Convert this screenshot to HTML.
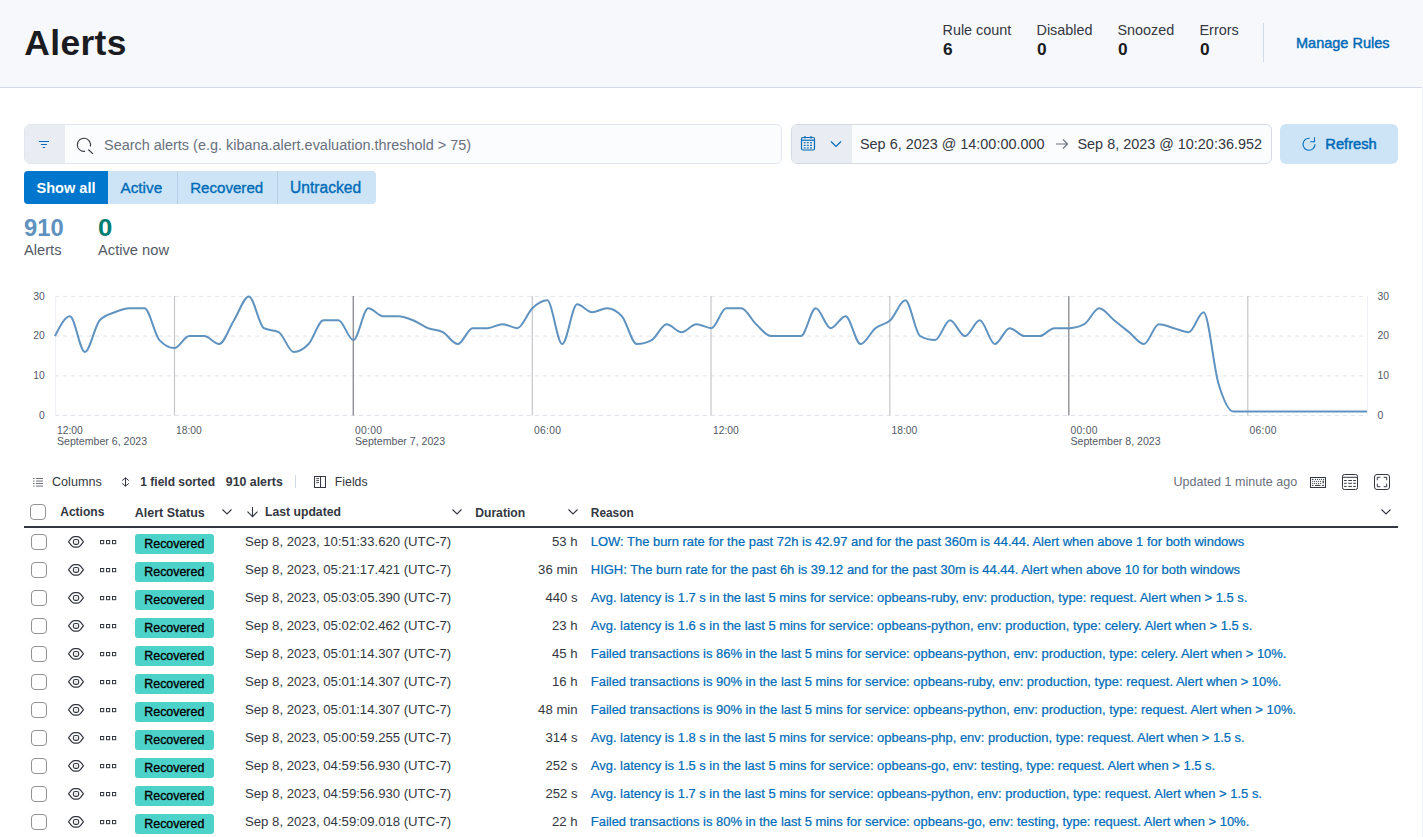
<!DOCTYPE html>
<html><head><meta charset="utf-8"><style>
html,body{margin:0;padding:0;width:1423px;height:837px;overflow:hidden;background:#fff;position:relative;font-family:"Liberation Sans", sans-serif}
.t{position:absolute;white-space:nowrap;line-height:1;font-family:"Liberation Sans", sans-serif}
svg{overflow:visible}
</style></head><body>
<div style="position:absolute;left:0px;top:0px;width:1423px;height:87px;background:#F7F8FC"></div>
<div style="position:absolute;left:0px;top:87px;width:1422px;height:1px;background:#D3DAE6"></div>
<div style="position:absolute;left:1422px;top:88px;width:1px;height:749px;background:#F1F4FA"></div>
<div class="t" style="left:24.30px;top:25.63px;font-size:35.4px;font-weight:700;color:#1A1C21;letter-spacing:0.35px">Alerts</div>
<div class="t" style="left:942.50px;top:23.01px;font-size:14.4px;font-weight:400;color:#343741;">Rule count</div>
<div class="t" style="left:1036.50px;top:23.01px;font-size:14.4px;font-weight:400;color:#343741;">Disabled</div>
<div class="t" style="left:1117.50px;top:23.01px;font-size:14.4px;font-weight:400;color:#343741;">Snoozed</div>
<div class="t" style="left:1199.50px;top:23.01px;font-size:14.4px;font-weight:400;color:#343741;">Errors</div>
<div class="t" style="left:942.50px;top:42.46px;font-size:16px;font-weight:700;color:#1A1C21;transform:scaleX(1.08);transform-origin:0 0">6</div>
<div class="t" style="left:1036.50px;top:42.46px;font-size:16px;font-weight:700;color:#1A1C21;transform:scaleX(1.08);transform-origin:0 0">0</div>
<div class="t" style="left:1117.50px;top:42.46px;font-size:16px;font-weight:700;color:#1A1C21;transform:scaleX(1.08);transform-origin:0 0">0</div>
<div class="t" style="left:1199.50px;top:42.46px;font-size:16px;font-weight:700;color:#1A1C21;transform:scaleX(1.08);transform-origin:0 0">0</div>
<div style="position:absolute;left:1263px;top:23px;width:1px;height:39px;background:#D3DAE6"></div>
<div class="t" style="left:1296.00px;top:36.33px;font-size:14.5px;font-weight:400;color:#006BB8;-webkit-text-stroke:0.45px currentColor">Manage Rules</div>
<div style="position:absolute;left:24px;top:124px;width:758px;height:40px;box-sizing:border-box;border:1px solid #E2E6EE;border-radius:6px;background:#FBFCFD;overflow:hidden"><div style="position:absolute;left:0;top:0;width:40px;height:38px;background:#E9EDF3"></div></div>
<svg style="position:absolute;left:38px;top:140px;" width="12" height="9" viewBox="0 0 12 9"><rect x="0.9" y="1" width="10.1" height="1" fill="#006BB8"/><rect x="2.9" y="4" width="6.1" height="1" fill="#006BB8"/><rect x="4.8" y="7" width="2.3" height="1" fill="#006BB8"/></svg>
<svg style="position:absolute;left:76px;top:138px;" width="17" height="17" viewBox="0 0 17 17"><path d="M9.05 13.3 A6.6 6.6 0 1 1 14.3 8.5" fill="none" stroke="#343741" stroke-width="1.1"/><path d="M12.3 11.5 L16.9 15.8" stroke="#343741" stroke-width="1.1"/></svg>
<div class="t" style="left:104.00px;top:137.77px;font-size:14.45px;font-weight:400;color:#69707D;">Search alerts (e.g. kibana.alert.evaluation.threshold &gt; 75)</div>
<div style="position:absolute;left:791px;top:124px;width:481px;height:40px;box-sizing:border-box;border:1px solid #D5DAE6;border-radius:6px;background:#FBFCFD;overflow:hidden"><div style="position:absolute;left:0;top:0;width:60px;height:38px;background:#E9EDF3"></div></div>
<svg style="position:absolute;left:800px;top:135px;" width="16" height="16" viewBox="0 0 16 16"><rect x="1.5" y="2.5" width="13" height="12.5" rx="1.5" fill="none" stroke="#006BB8" stroke-width="1.2"/><line x1="1.5" y1="5.2" x2="14.5" y2="5.2" stroke="#006BB8" stroke-width="1.2"/><line x1="5" y1="1" x2="5" y2="3.5" stroke="#006BB8" stroke-width="1.2"/><line x1="11" y1="1" x2="11" y2="3.5" stroke="#006BB8" stroke-width="1.2"/><rect x="3.6" y="7.2" width="2" height="1.1" fill="#006BB8"/><rect x="3.6" y="9.8" width="2" height="1.1" fill="#006BB8"/><rect x="3.6" y="12.4" width="2" height="1.1" fill="#006BB8"/><rect x="6.8" y="7.2" width="2" height="1.1" fill="#006BB8"/><rect x="6.8" y="9.8" width="2" height="1.1" fill="#006BB8"/><rect x="6.8" y="12.4" width="2" height="1.1" fill="#006BB8"/><rect x="10.0" y="7.2" width="2" height="1.1" fill="#006BB8"/><rect x="10.0" y="9.8" width="2" height="1.1" fill="#006BB8"/><rect x="10.0" y="12.4" width="2" height="1.1" fill="#006BB8"/></svg>
<svg style="position:absolute;left:830px;top:140px;" width="12" height="8" viewBox="0 0 12 8"><path d="M1 1.5 L6 6.5 L11 1.5" fill="none" stroke="#006BB8" stroke-width="1.2"/></svg>
<div class="t" style="left:860.00px;top:136.80px;font-size:14.41px;font-weight:400;color:#343741;">Sep 6, 2023 @ 14:00:00.000</div>
<svg style="position:absolute;left:1055px;top:137px;" width="14" height="14" viewBox="0 0 14 14"><path d="M1 7 H12.5 M8 2.5 L12.5 7 L8 11.5" fill="none" stroke="#69707D" stroke-width="1.1"/></svg>
<div class="t" style="left:1077.50px;top:136.80px;font-size:14.41px;font-weight:400;color:#343741;">Sep 8, 2023 @ 10:20:36.952</div>
<div style="position:absolute;left:1280px;top:124px;width:118px;height:40px;background:#CCE4F5;border-radius:6px"></div>
<svg style="position:absolute;left:1301px;top:136px;" width="16" height="16" viewBox="0 0 16 16"><path d="M14 8.3 A6 6 0 1 1 8.6 2.3" fill="none" stroke="#006BB8" stroke-width="1.1"/><path d="M9.3 5.7 H13.5 V1.2" fill="none" stroke="#006BB8" stroke-width="1.1"/></svg>
<div class="t" style="left:1325.30px;top:136.56px;font-size:14.7px;font-weight:400;color:#006BB8;-webkit-text-stroke:0.5px currentColor">Refresh</div>
<div style="position:absolute;left:24px;top:171px;width:352px;height:33px;border-radius:4px;overflow:hidden;background:#CCE4F5"><div style="position:absolute;left:0;top:0;width:84px;height:33px;background:#0077CC"></div><div style="position:absolute;left:153px;top:0;width:1px;height:33px;background:#B7CFE6"></div><div style="position:absolute;left:253px;top:0;width:1px;height:33px;background:#B7CFE6"></div></div>
<div class="t" style="left:36.50px;top:180.58px;font-size:14.55px;font-weight:700;color:#FFFFFF;">Show all</div>
<div class="t" style="left:120.50px;top:179.95px;font-size:15.3px;font-weight:400;color:#006BB8;-webkit-text-stroke:0.35px currentColor">Active</div>
<div class="t" style="left:190.20px;top:180.12px;font-size:15.1px;font-weight:400;color:#006BB8;-webkit-text-stroke:0.35px currentColor">Recovered</div>
<div class="t" style="left:290.00px;top:179.69px;font-size:15.6px;font-weight:400;color:#006BB8;-webkit-text-stroke:0.35px currentColor">Untracked</div>
<div class="t" style="left:24.00px;top:216.45px;font-size:23.8px;font-weight:700;color:#6092C0;">910</div>
<div class="t" style="left:98.30px;top:216.45px;font-size:23.8px;font-weight:700;color:#017D73;transform:scaleX(1.08);transform-origin:0 0">0</div>
<div class="t" style="left:24.00px;top:242.96px;font-size:14.7px;font-weight:400;color:#535966;">Alerts</div>
<div class="t" style="left:98.00px;top:242.96px;font-size:14.7px;font-weight:400;color:#535966;">Active now</div>
<svg style="position:absolute;left:0px;top:0px;pointer-events:none" width="1423" height="837" viewBox="0 0 1423 837"><line x1="55" y1="296.4" x2="1367" y2="296.4" stroke="#E0E3EB" stroke-width="1" stroke-dasharray="4 4"/><line x1="55" y1="336.1" x2="1367" y2="336.1" stroke="#E0E3EB" stroke-width="1" stroke-dasharray="4 4"/><line x1="55" y1="375.8" x2="1367" y2="375.8" stroke="#E0E3EB" stroke-width="1" stroke-dasharray="4 4"/><line x1="55" y1="415.5" x2="1367" y2="415.5" stroke="#E0E3EB" stroke-width="1" stroke-dasharray="4 4"/><line x1="55.5" y1="296" x2="55.5" y2="415.5" stroke="#EEF0F6" stroke-width="1"/><line x1="1367.5" y1="296" x2="1367.5" y2="415.5" stroke="#EEF0F6" stroke-width="1"/><line x1="174.5" y1="296" x2="174.5" y2="415.5" stroke="#C6C7CA" stroke-width="1.2"/><line x1="353.3" y1="296" x2="353.3" y2="415.5" stroke="#8F9196" stroke-width="1.4"/><line x1="532.3" y1="296" x2="532.3" y2="415.5" stroke="#C6C7CA" stroke-width="1.2"/><line x1="711.0" y1="296" x2="711.0" y2="415.5" stroke="#C6C7CA" stroke-width="1.2"/><line x1="889.8" y1="296" x2="889.8" y2="415.5" stroke="#C6C7CA" stroke-width="1.2"/><line x1="1068.8" y1="296" x2="1068.8" y2="415.5" stroke="#8F9196" stroke-width="1.4"/><line x1="1247.8" y1="296" x2="1247.8" y2="415.5" stroke="#C6C7CA" stroke-width="1.2"/><path d="M55.00,336.10 C59.97,326.18 64.94,316.25 69.92,316.25 C74.89,316.25 79.86,351.98 84.83,351.98 C89.81,351.98 94.78,325.51 99.75,320.22 C104.72,314.93 109.70,314.26 114.67,312.28 C119.64,310.29 124.61,308.31 129.58,308.31 C134.56,308.31 139.53,308.31 144.50,308.31 C149.47,308.31 154.45,334.78 159.42,340.07 C164.39,345.36 169.36,348.01 174.34,348.01 C179.31,348.01 184.28,336.10 189.25,336.10 C194.23,336.10 199.20,336.10 204.17,336.10 C209.14,336.10 214.11,344.04 219.09,344.04 C224.06,344.04 229.03,328.16 234.00,320.22 C238.98,312.28 243.95,296.40 248.92,296.40 C253.89,296.40 258.87,325.51 263.84,328.16 C268.81,330.81 273.78,329.48 278.75,332.13 C283.73,334.78 288.70,351.98 293.67,351.98 C298.64,351.98 303.62,349.33 308.59,344.04 C313.56,338.75 318.53,320.22 323.51,320.22 C328.48,320.22 333.45,320.22 338.42,320.22 C343.40,320.22 348.37,340.07 353.34,340.07 C358.31,340.07 363.28,308.31 368.26,308.31 C373.23,308.31 378.20,316.25 383.17,316.25 C388.15,316.25 393.12,316.25 398.09,316.25 C403.06,316.25 408.04,318.24 413.01,320.22 C417.98,322.21 422.95,326.17 427.93,328.16 C432.90,330.14 437.87,329.48 442.84,332.13 C447.81,334.78 452.79,344.04 457.76,344.04 C462.73,344.04 467.70,328.16 472.68,328.16 C477.65,328.16 482.62,328.16 487.59,328.16 C492.57,328.16 497.54,324.19 502.51,324.19 C507.48,324.19 512.45,328.16 517.43,328.16 C522.40,328.16 527.37,312.94 532.34,308.31 C537.32,303.68 542.29,300.37 547.26,300.37 C552.23,300.37 557.21,344.04 562.18,344.04 C567.15,344.04 572.12,304.34 577.10,304.34 C582.07,304.34 587.04,312.28 592.01,312.28 C596.98,312.28 601.96,308.31 606.93,308.31 C611.90,308.31 616.87,310.96 621.85,316.25 C626.82,321.54 631.79,344.04 636.76,344.04 C641.74,344.04 646.71,342.72 651.68,340.07 C656.65,337.42 661.62,324.19 666.60,324.19 C671.57,324.19 676.54,332.13 681.51,332.13 C686.49,332.13 691.46,324.19 696.43,324.19 C701.40,324.19 706.38,328.16 711.35,328.16 C716.32,328.16 721.29,308.31 726.26,308.31 C731.24,308.31 736.21,308.31 741.18,308.31 C746.15,308.31 751.13,319.56 756.10,324.19 C761.07,328.82 766.04,336.10 771.02,336.10 C775.99,336.10 780.96,336.10 785.93,336.10 C790.91,336.10 795.88,336.10 800.85,336.10 C805.82,336.10 810.79,308.31 815.77,308.31 C820.74,308.31 825.71,328.16 830.68,328.16 C835.66,328.16 840.63,316.25 845.60,316.25 C850.57,316.25 855.55,344.04 860.52,344.04 C865.49,344.04 870.46,332.13 875.43,328.16 C880.41,324.19 885.38,324.85 890.35,320.22 C895.32,315.59 900.30,300.37 905.27,300.37 C910.24,300.37 915.21,333.45 920.19,336.10 C925.16,338.75 930.13,340.07 935.10,340.07 C940.08,340.07 945.05,320.22 950.02,320.22 C954.99,320.22 959.96,336.10 964.94,336.10 C969.91,336.10 974.88,320.22 979.85,320.22 C984.83,320.22 989.80,344.04 994.77,344.04 C999.74,344.04 1004.72,328.16 1009.69,328.16 C1014.66,328.16 1019.63,336.10 1024.61,336.10 C1029.58,336.10 1034.55,336.10 1039.52,336.10 C1044.49,336.10 1049.47,328.16 1054.44,328.16 C1059.41,328.16 1064.38,328.16 1069.36,328.16 C1074.33,328.16 1079.30,326.84 1084.27,324.19 C1089.25,321.54 1094.22,308.31 1099.19,308.31 C1104.16,308.31 1109.13,316.25 1114.11,320.22 C1119.08,324.19 1124.05,328.16 1129.02,332.13 C1134.00,336.10 1138.97,344.04 1143.94,344.04 C1148.91,344.04 1153.89,324.19 1158.86,324.19 C1163.83,324.19 1168.80,326.84 1173.78,328.16 C1178.75,329.48 1183.72,332.13 1188.69,332.13 C1193.66,332.13 1198.64,312.28 1203.61,312.28 C1208.58,312.28 1213.55,367.20 1218.53,383.74 C1223.50,400.28 1228.47,411.53 1233.44,411.53 C1238.42,411.53 1243.39,411.53 1248.36,411.53 C1253.33,411.53 1258.30,411.53 1263.28,411.53 C1268.25,411.53 1273.22,411.53 1278.19,411.53 C1283.17,411.53 1288.14,411.53 1293.11,411.53 C1298.08,411.53 1303.06,411.53 1308.03,411.53 C1313.00,411.53 1317.97,411.53 1322.94,411.53 C1327.92,411.53 1332.89,411.53 1337.86,411.53 C1342.83,411.53 1347.81,411.53 1352.78,411.53 C1357.52,411.53 1362.26,411.53 1367.00,411.53" fill="none" stroke="#6092C0" stroke-width="2" stroke-linejoin="round"/></svg>
<div class="t" style="right:1378.30px;top:291.70px;font-size:10.4px;font-weight:400;color:#535966;">30</div>
<div class="t" style="left:1377.50px;top:291.70px;font-size:10.4px;font-weight:400;color:#535966;">30</div>
<div class="t" style="right:1378.30px;top:331.40px;font-size:10.4px;font-weight:400;color:#535966;">20</div>
<div class="t" style="left:1377.50px;top:331.40px;font-size:10.4px;font-weight:400;color:#535966;">20</div>
<div class="t" style="right:1378.30px;top:371.10px;font-size:10.4px;font-weight:400;color:#535966;">10</div>
<div class="t" style="left:1377.50px;top:371.10px;font-size:10.4px;font-weight:400;color:#535966;">10</div>
<div class="t" style="right:1378.30px;top:410.80px;font-size:10.4px;font-weight:400;color:#535966;">0</div>
<div class="t" style="left:1377.50px;top:410.80px;font-size:10.4px;font-weight:400;color:#535966;">0</div>
<div class="t" style="left:57.00px;top:426.28px;font-size:10.3px;font-weight:400;color:#535966;">12:00</div>
<div class="t" style="left:57.00px;top:435.63px;font-size:10.6px;font-weight:400;color:#535966;">September 6, 2023</div>
<div class="t" style="left:176.00px;top:426.28px;font-size:10.3px;font-weight:400;color:#535966;">18:00</div>
<div class="t" style="left:355.00px;top:426.28px;font-size:10.3px;font-weight:400;color:#535966;letter-spacing:0.3px">00:00</div>
<div class="t" style="left:355.00px;top:435.63px;font-size:10.6px;font-weight:400;color:#535966;">September 7, 2023</div>
<div class="t" style="left:534.00px;top:426.28px;font-size:10.3px;font-weight:400;color:#535966;letter-spacing:0.3px">06:00</div>
<div class="t" style="left:713.00px;top:426.28px;font-size:10.3px;font-weight:400;color:#535966;">12:00</div>
<div class="t" style="left:891.50px;top:426.28px;font-size:10.3px;font-weight:400;color:#535966;">18:00</div>
<div class="t" style="left:1070.50px;top:426.28px;font-size:10.3px;font-weight:400;color:#535966;letter-spacing:0.3px">00:00</div>
<div class="t" style="left:1070.50px;top:435.63px;font-size:10.6px;font-weight:400;color:#535966;">September 8, 2023</div>
<div class="t" style="left:1249.50px;top:426.28px;font-size:10.3px;font-weight:400;color:#535966;letter-spacing:0.3px">06:00</div>
<svg style="position:absolute;left:33px;top:478px;" width="10" height="9" viewBox="0 0 10 9"><rect x="0" y="0.10" width="1.5" height="0.9" fill="#5a5f6b"/><rect x="3" y="0.10" width="7" height="0.9" fill="#5a5f6b"/><rect x="0" y="2.60" width="1.5" height="0.9" fill="#5a5f6b"/><rect x="3" y="2.60" width="7" height="0.9" fill="#5a5f6b"/><rect x="0" y="5.10" width="1.5" height="0.9" fill="#5a5f6b"/><rect x="3" y="5.10" width="7" height="0.9" fill="#5a5f6b"/><rect x="0" y="7.60" width="1.5" height="0.9" fill="#5a5f6b"/><rect x="3" y="7.60" width="7" height="0.9" fill="#5a5f6b"/></svg>
<div class="t" style="left:52.00px;top:475.73px;font-size:12.6px;font-weight:400;color:#343741;">Columns</div>
<svg style="position:absolute;left:121px;top:477px;" width="9" height="10" viewBox="0 0 9 10"><path d="M4.5 0.8 V9.2 M1.2 3.6 L4.5 0.8 L7.8 3.6 M1.2 6.4 L4.5 9.2 L7.8 6.4" fill="none" stroke="#343741" stroke-width="1"/></svg>
<div class="t" style="left:140.30px;top:476.24px;font-size:12.0px;font-weight:700;color:#343741;">1 field sorted</div>
<div class="t" style="left:225.80px;top:475.95px;font-size:12.35px;font-weight:700;color:#343741;">910 alerts</div>
<div style="position:absolute;left:295px;top:475px;width:1px;height:13px;background:#D3DAE6"></div>
<svg style="position:absolute;left:314px;top:476px;" width="12" height="12" viewBox="0 0 12 12"><rect x="0.5" y="0.5" width="11" height="11" fill="none" stroke="#343741" stroke-width="1"/><line x1="6.5" y1="1" x2="6.5" y2="11" stroke="#343741" stroke-width="1"/><rect x="2.2" y="2.2" width="2.8" height="0.9" fill="#343741"/><rect x="2.2" y="4.2" width="2.8" height="0.9" fill="#343741"/><rect x="2.2" y="6.2" width="2.8" height="0.9" fill="#343741"/></svg>
<div class="t" style="left:334.80px;top:475.99px;font-size:12.3px;font-weight:400;color:#343741;">Fields</div>
<div class="t" style="left:1173.50px;top:475.86px;font-size:12.57px;font-weight:400;color:#69707D;">Updated 1 minute ago</div>
<svg style="position:absolute;left:1310px;top:477px;" width="16" height="11" viewBox="0 0 16 11"><rect x="0.5" y="0.5" width="15" height="10" fill="none" stroke="#343741" stroke-width="1"/><rect x="1.9" y="1.9" width="1.6" height="1" fill="#343741"/><rect x="5" y="1.9" width="1" height="1" fill="#343741"/><rect x="7" y="1.9" width="1" height="1" fill="#343741"/><rect x="9.1" y="1.9" width="1" height="1" fill="#343741"/><rect x="11.1" y="1.9" width="1" height="1" fill="#343741"/><rect x="13.1" y="1.9" width="1" height="1" fill="#343741"/><rect x="2.2" y="3.9" width="1" height="1" fill="#343741"/><rect x="2.2" y="5.9" width="1" height="1" fill="#343741"/><rect x="4.1" y="3.9" width="1" height="1" fill="#343741"/><rect x="4.1" y="5.9" width="1" height="1" fill="#343741"/><rect x="6.1" y="3.9" width="1" height="1" fill="#343741"/><rect x="6.1" y="5.9" width="1" height="1" fill="#343741"/><rect x="8.1" y="3.9" width="1" height="1" fill="#343741"/><rect x="8.1" y="5.9" width="1" height="1" fill="#343741"/><rect x="10.1" y="3.9" width="1" height="1" fill="#343741"/><rect x="10.1" y="5.9" width="1" height="1" fill="#343741"/><rect x="12.6" y="3.7" width="1.3" height="2.6" fill="#343741"/><rect x="1.9" y="7.9" width="1.6" height="1" fill="#343741"/><rect x="5" y="7.9" width="5.5" height="1" fill="#343741"/><rect x="12" y="7.9" width="1.9" height="1" fill="#343741"/></svg>
<svg style="position:absolute;left:1342px;top:474px;" width="16" height="16" viewBox="0 0 16 16"><rect x="0.5" y="0.5" width="15" height="15" rx="2" fill="none" stroke="#343741" stroke-width="1"/><line x1="1" y1="3.3" x2="15" y2="3.3" stroke="#343741" stroke-width="1"/><rect x="2.1" y="6.0" width="2.6" height="1" fill="#343741"/><rect x="6.3" y="6.0" width="3.6" height="1" fill="#343741"/><rect x="11.2" y="6.0" width="2.7" height="1" fill="#343741"/><rect x="2.1" y="8.8" width="2.6" height="1" fill="#343741"/><rect x="6.3" y="8.8" width="3.6" height="1" fill="#343741"/><rect x="11.2" y="8.8" width="2.7" height="1" fill="#343741"/><rect x="2.1" y="11.9" width="2.6" height="1" fill="#343741"/><rect x="6.3" y="11.9" width="3.6" height="1" fill="#343741"/><rect x="11.2" y="11.9" width="2.7" height="1" fill="#343741"/></svg>
<svg style="position:absolute;left:1374px;top:474px;" width="16" height="16" viewBox="0 0 16 16"><rect x="0.5" y="0.5" width="15" height="15" rx="2.5" fill="none" stroke="#343741" stroke-width="1"/><path d="M3.3 6.3 V3.3 H6.3 M9.7 3.3 H12.7 V6.3 M12.7 9.7 V12.7 H9.7 M6.3 12.7 H3.3 V9.7" fill="none" stroke="#343741" stroke-width="1"/></svg>
<div style="position:absolute;left:30px;top:504px;width:16px;height:16px;box-sizing:border-box;border:1px solid #909296;border-radius:4px;background:#fff"></div>
<div class="t" style="left:60.20px;top:505.80px;font-size:12.05px;font-weight:700;color:#343741;">Actions</div>
<div class="t" style="left:134.80px;top:506.94px;font-size:12.47px;font-weight:700;color:#343741;">Alert Status</div>
<svg style="position:absolute;left:221px;top:508px;" width="12" height="8" viewBox="0 0 12 8"><path d="M1.5 1.5 L6 6 L10.5 1.5" fill="none" stroke="#343741" stroke-width="1.1"/></svg>
<svg style="position:absolute;left:246px;top:506px;" width="13" height="12" viewBox="0 0 13 12"><path d="M6.5 1 V10.5 M1.5 5.6 L6.5 10.6 L11.5 5.6" fill="none" stroke="#343741" stroke-width="1.1"/></svg>
<div class="t" style="left:265.00px;top:505.66px;font-size:12.21px;font-weight:700;color:#343741;">Last updated</div>
<svg style="position:absolute;left:451px;top:508px;" width="12" height="8" viewBox="0 0 12 8"><path d="M1.5 1.5 L6 6 L10.5 1.5" fill="none" stroke="#343741" stroke-width="1.1"/></svg>
<div class="t" style="left:475.20px;top:507.21px;font-size:12.16px;font-weight:700;color:#343741;">Duration</div>
<svg style="position:absolute;left:567px;top:508px;" width="12" height="8" viewBox="0 0 12 8"><path d="M1.5 1.5 L6 6 L10.5 1.5" fill="none" stroke="#343741" stroke-width="1.1"/></svg>
<div class="t" style="left:590.80px;top:508.23px;font-size:11.9px;font-weight:700;color:#343741;">Reason</div>
<svg style="position:absolute;left:1380px;top:508px;" width="12" height="8" viewBox="0 0 12 8"><path d="M1.5 1.5 L6 6 L10.5 1.5" fill="none" stroke="#343741" stroke-width="1.1"/></svg>
<div style="position:absolute;left:24px;top:526px;width:1374px;height:2px;background:#343741"></div>
<div style="position:absolute;left:31px;top:534px;width:16px;height:16px;box-sizing:border-box;border:1px solid #909296;border-radius:4px;background:#fff"></div>
<svg style="position:absolute;left:68px;top:536px;" width="16" height="12" viewBox="0 0 16 12"><path d="M0.6,5.8 C2.4,3.3 3.9,0.6 6.5,0.6 H9.5 C12.1,0.6 13.6,3.3 15.4,5.8 C13.6,8.4 12.1,11.1 9.5,11.1 H6.5 C3.9,11.1 2.4,8.4 0.6,5.8 Z" fill="none" stroke="#343741" stroke-width="1.15"/><rect x="5.4" y="3.5" width="5.3" height="4.9" rx="1.8" fill="none" stroke="#343741" stroke-width="1.15"/><rect x="7.5" y="5.4" width="1.1" height="1.1" fill="#8a8f99"/></svg>
<svg style="position:absolute;left:99.5px;top:540px;" width="17" height="4.5" viewBox="0 0 17 4.5"><rect x="0.5" y="0.5" width="3.2" height="3.2" fill="none" stroke="#343741" stroke-width="1"/><rect x="6.5" y="0.5" width="3.2" height="3.2" fill="none" stroke="#343741" stroke-width="1"/><rect x="12.5" y="0.5" width="3.2" height="3.2" fill="none" stroke="#343741" stroke-width="1"/></svg>
<div style="position:absolute;left:135px;top:534px;width:79px;height:20px;background:#4DD2CA;border-radius:3px"></div>
<div class="t" style="left:144.30px;top:538.09px;font-size:12.41px;font-weight:400;color:#000000;-webkit-text-stroke:0.35px currentColor">Recovered</div>
<div class="t" style="left:245.00px;top:534.55px;font-size:13.17px;font-weight:400;color:#343741;">Sep 8, 2023, 10:51:33.620 (UTC-7)</div>
<div class="t" style="right:845.40px;top:534.55px;font-size:13.17px;font-weight:400;color:#343741;">53 h</div>
<div class="t" style="left:590.80px;top:535.53px;font-size:12.96px;font-weight:400;color:#006BB8;-webkit-text-stroke:0.22px currentColor">LOW: The burn rate for the past 72h is 42.97 and for the past 360m is 44.44. Alert when above 1 for both windows</div>
<div style="position:absolute;left:31px;top:562px;width:16px;height:16px;box-sizing:border-box;border:1px solid #909296;border-radius:4px;background:#fff"></div>
<svg style="position:absolute;left:68px;top:564px;" width="16" height="12" viewBox="0 0 16 12"><path d="M0.6,5.8 C2.4,3.3 3.9,0.6 6.5,0.6 H9.5 C12.1,0.6 13.6,3.3 15.4,5.8 C13.6,8.4 12.1,11.1 9.5,11.1 H6.5 C3.9,11.1 2.4,8.4 0.6,5.8 Z" fill="none" stroke="#343741" stroke-width="1.15"/><rect x="5.4" y="3.5" width="5.3" height="4.9" rx="1.8" fill="none" stroke="#343741" stroke-width="1.15"/><rect x="7.5" y="5.4" width="1.1" height="1.1" fill="#8a8f99"/></svg>
<svg style="position:absolute;left:99.5px;top:568px;" width="17" height="4.5" viewBox="0 0 17 4.5"><rect x="0.5" y="0.5" width="3.2" height="3.2" fill="none" stroke="#343741" stroke-width="1"/><rect x="6.5" y="0.5" width="3.2" height="3.2" fill="none" stroke="#343741" stroke-width="1"/><rect x="12.5" y="0.5" width="3.2" height="3.2" fill="none" stroke="#343741" stroke-width="1"/></svg>
<div style="position:absolute;left:135px;top:562px;width:79px;height:20px;background:#4DD2CA;border-radius:3px"></div>
<div class="t" style="left:144.30px;top:566.09px;font-size:12.41px;font-weight:400;color:#000000;-webkit-text-stroke:0.35px currentColor">Recovered</div>
<div class="t" style="left:245.00px;top:562.55px;font-size:13.17px;font-weight:400;color:#343741;">Sep 8, 2023, 05:21:17.421 (UTC-7)</div>
<div class="t" style="right:845.40px;top:562.55px;font-size:13.17px;font-weight:400;color:#343741;">36 min</div>
<div class="t" style="left:590.80px;top:563.53px;font-size:12.96px;font-weight:400;color:#006BB8;-webkit-text-stroke:0.22px currentColor">HIGH: The burn rate for the past 6h is 39.12 and for the past 30m is 44.44. Alert when above 10 for both windows</div>
<div style="position:absolute;left:31px;top:590px;width:16px;height:16px;box-sizing:border-box;border:1px solid #909296;border-radius:4px;background:#fff"></div>
<svg style="position:absolute;left:68px;top:592px;" width="16" height="12" viewBox="0 0 16 12"><path d="M0.6,5.8 C2.4,3.3 3.9,0.6 6.5,0.6 H9.5 C12.1,0.6 13.6,3.3 15.4,5.8 C13.6,8.4 12.1,11.1 9.5,11.1 H6.5 C3.9,11.1 2.4,8.4 0.6,5.8 Z" fill="none" stroke="#343741" stroke-width="1.15"/><rect x="5.4" y="3.5" width="5.3" height="4.9" rx="1.8" fill="none" stroke="#343741" stroke-width="1.15"/><rect x="7.5" y="5.4" width="1.1" height="1.1" fill="#8a8f99"/></svg>
<svg style="position:absolute;left:99.5px;top:596px;" width="17" height="4.5" viewBox="0 0 17 4.5"><rect x="0.5" y="0.5" width="3.2" height="3.2" fill="none" stroke="#343741" stroke-width="1"/><rect x="6.5" y="0.5" width="3.2" height="3.2" fill="none" stroke="#343741" stroke-width="1"/><rect x="12.5" y="0.5" width="3.2" height="3.2" fill="none" stroke="#343741" stroke-width="1"/></svg>
<div style="position:absolute;left:135px;top:590px;width:79px;height:20px;background:#4DD2CA;border-radius:3px"></div>
<div class="t" style="left:144.30px;top:594.09px;font-size:12.41px;font-weight:400;color:#000000;-webkit-text-stroke:0.35px currentColor">Recovered</div>
<div class="t" style="left:245.00px;top:590.55px;font-size:13.17px;font-weight:400;color:#343741;">Sep 8, 2023, 05:03:05.390 (UTC-7)</div>
<div class="t" style="right:845.40px;top:590.55px;font-size:13.17px;font-weight:400;color:#343741;">440 s</div>
<div class="t" style="left:590.80px;top:591.53px;font-size:12.96px;font-weight:400;color:#006BB8;-webkit-text-stroke:0.22px currentColor">Avg. latency is 1.7 s in the last 5 mins for service: opbeans-ruby, env: production, type: request. Alert when &gt; 1.5 s.</div>
<div style="position:absolute;left:31px;top:618px;width:16px;height:16px;box-sizing:border-box;border:1px solid #909296;border-radius:4px;background:#fff"></div>
<svg style="position:absolute;left:68px;top:620px;" width="16" height="12" viewBox="0 0 16 12"><path d="M0.6,5.8 C2.4,3.3 3.9,0.6 6.5,0.6 H9.5 C12.1,0.6 13.6,3.3 15.4,5.8 C13.6,8.4 12.1,11.1 9.5,11.1 H6.5 C3.9,11.1 2.4,8.4 0.6,5.8 Z" fill="none" stroke="#343741" stroke-width="1.15"/><rect x="5.4" y="3.5" width="5.3" height="4.9" rx="1.8" fill="none" stroke="#343741" stroke-width="1.15"/><rect x="7.5" y="5.4" width="1.1" height="1.1" fill="#8a8f99"/></svg>
<svg style="position:absolute;left:99.5px;top:624px;" width="17" height="4.5" viewBox="0 0 17 4.5"><rect x="0.5" y="0.5" width="3.2" height="3.2" fill="none" stroke="#343741" stroke-width="1"/><rect x="6.5" y="0.5" width="3.2" height="3.2" fill="none" stroke="#343741" stroke-width="1"/><rect x="12.5" y="0.5" width="3.2" height="3.2" fill="none" stroke="#343741" stroke-width="1"/></svg>
<div style="position:absolute;left:135px;top:618px;width:79px;height:20px;background:#4DD2CA;border-radius:3px"></div>
<div class="t" style="left:144.30px;top:622.09px;font-size:12.41px;font-weight:400;color:#000000;-webkit-text-stroke:0.35px currentColor">Recovered</div>
<div class="t" style="left:245.00px;top:618.55px;font-size:13.17px;font-weight:400;color:#343741;">Sep 8, 2023, 05:02:02.462 (UTC-7)</div>
<div class="t" style="right:845.40px;top:618.55px;font-size:13.17px;font-weight:400;color:#343741;">23 h</div>
<div class="t" style="left:590.80px;top:619.53px;font-size:12.96px;font-weight:400;color:#006BB8;-webkit-text-stroke:0.22px currentColor">Avg. latency is 1.6 s in the last 5 mins for service: opbeans-python, env: production, type: celery. Alert when &gt; 1.5 s.</div>
<div style="position:absolute;left:31px;top:646px;width:16px;height:16px;box-sizing:border-box;border:1px solid #909296;border-radius:4px;background:#fff"></div>
<svg style="position:absolute;left:68px;top:648px;" width="16" height="12" viewBox="0 0 16 12"><path d="M0.6,5.8 C2.4,3.3 3.9,0.6 6.5,0.6 H9.5 C12.1,0.6 13.6,3.3 15.4,5.8 C13.6,8.4 12.1,11.1 9.5,11.1 H6.5 C3.9,11.1 2.4,8.4 0.6,5.8 Z" fill="none" stroke="#343741" stroke-width="1.15"/><rect x="5.4" y="3.5" width="5.3" height="4.9" rx="1.8" fill="none" stroke="#343741" stroke-width="1.15"/><rect x="7.5" y="5.4" width="1.1" height="1.1" fill="#8a8f99"/></svg>
<svg style="position:absolute;left:99.5px;top:652px;" width="17" height="4.5" viewBox="0 0 17 4.5"><rect x="0.5" y="0.5" width="3.2" height="3.2" fill="none" stroke="#343741" stroke-width="1"/><rect x="6.5" y="0.5" width="3.2" height="3.2" fill="none" stroke="#343741" stroke-width="1"/><rect x="12.5" y="0.5" width="3.2" height="3.2" fill="none" stroke="#343741" stroke-width="1"/></svg>
<div style="position:absolute;left:135px;top:646px;width:79px;height:20px;background:#4DD2CA;border-radius:3px"></div>
<div class="t" style="left:144.30px;top:650.09px;font-size:12.41px;font-weight:400;color:#000000;-webkit-text-stroke:0.35px currentColor">Recovered</div>
<div class="t" style="left:245.00px;top:646.55px;font-size:13.17px;font-weight:400;color:#343741;">Sep 8, 2023, 05:01:14.307 (UTC-7)</div>
<div class="t" style="right:845.40px;top:646.55px;font-size:13.17px;font-weight:400;color:#343741;">45 h</div>
<div class="t" style="left:590.80px;top:647.53px;font-size:12.96px;font-weight:400;color:#006BB8;-webkit-text-stroke:0.22px currentColor">Failed transactions is 86% in the last 5 mins for service: opbeans-python, env: production, type: celery. Alert when &gt; 10%.</div>
<div style="position:absolute;left:31px;top:674px;width:16px;height:16px;box-sizing:border-box;border:1px solid #909296;border-radius:4px;background:#fff"></div>
<svg style="position:absolute;left:68px;top:676px;" width="16" height="12" viewBox="0 0 16 12"><path d="M0.6,5.8 C2.4,3.3 3.9,0.6 6.5,0.6 H9.5 C12.1,0.6 13.6,3.3 15.4,5.8 C13.6,8.4 12.1,11.1 9.5,11.1 H6.5 C3.9,11.1 2.4,8.4 0.6,5.8 Z" fill="none" stroke="#343741" stroke-width="1.15"/><rect x="5.4" y="3.5" width="5.3" height="4.9" rx="1.8" fill="none" stroke="#343741" stroke-width="1.15"/><rect x="7.5" y="5.4" width="1.1" height="1.1" fill="#8a8f99"/></svg>
<svg style="position:absolute;left:99.5px;top:680px;" width="17" height="4.5" viewBox="0 0 17 4.5"><rect x="0.5" y="0.5" width="3.2" height="3.2" fill="none" stroke="#343741" stroke-width="1"/><rect x="6.5" y="0.5" width="3.2" height="3.2" fill="none" stroke="#343741" stroke-width="1"/><rect x="12.5" y="0.5" width="3.2" height="3.2" fill="none" stroke="#343741" stroke-width="1"/></svg>
<div style="position:absolute;left:135px;top:674px;width:79px;height:20px;background:#4DD2CA;border-radius:3px"></div>
<div class="t" style="left:144.30px;top:678.09px;font-size:12.41px;font-weight:400;color:#000000;-webkit-text-stroke:0.35px currentColor">Recovered</div>
<div class="t" style="left:245.00px;top:674.55px;font-size:13.17px;font-weight:400;color:#343741;">Sep 8, 2023, 05:01:14.307 (UTC-7)</div>
<div class="t" style="right:845.40px;top:674.55px;font-size:13.17px;font-weight:400;color:#343741;">16 h</div>
<div class="t" style="left:590.80px;top:675.53px;font-size:12.96px;font-weight:400;color:#006BB8;-webkit-text-stroke:0.22px currentColor">Failed transactions is 90% in the last 5 mins for service: opbeans-ruby, env: production, type: request. Alert when &gt; 10%.</div>
<div style="position:absolute;left:31px;top:702px;width:16px;height:16px;box-sizing:border-box;border:1px solid #909296;border-radius:4px;background:#fff"></div>
<svg style="position:absolute;left:68px;top:704px;" width="16" height="12" viewBox="0 0 16 12"><path d="M0.6,5.8 C2.4,3.3 3.9,0.6 6.5,0.6 H9.5 C12.1,0.6 13.6,3.3 15.4,5.8 C13.6,8.4 12.1,11.1 9.5,11.1 H6.5 C3.9,11.1 2.4,8.4 0.6,5.8 Z" fill="none" stroke="#343741" stroke-width="1.15"/><rect x="5.4" y="3.5" width="5.3" height="4.9" rx="1.8" fill="none" stroke="#343741" stroke-width="1.15"/><rect x="7.5" y="5.4" width="1.1" height="1.1" fill="#8a8f99"/></svg>
<svg style="position:absolute;left:99.5px;top:708px;" width="17" height="4.5" viewBox="0 0 17 4.5"><rect x="0.5" y="0.5" width="3.2" height="3.2" fill="none" stroke="#343741" stroke-width="1"/><rect x="6.5" y="0.5" width="3.2" height="3.2" fill="none" stroke="#343741" stroke-width="1"/><rect x="12.5" y="0.5" width="3.2" height="3.2" fill="none" stroke="#343741" stroke-width="1"/></svg>
<div style="position:absolute;left:135px;top:702px;width:79px;height:20px;background:#4DD2CA;border-radius:3px"></div>
<div class="t" style="left:144.30px;top:706.09px;font-size:12.41px;font-weight:400;color:#000000;-webkit-text-stroke:0.35px currentColor">Recovered</div>
<div class="t" style="left:245.00px;top:702.55px;font-size:13.17px;font-weight:400;color:#343741;">Sep 8, 2023, 05:01:14.307 (UTC-7)</div>
<div class="t" style="right:845.40px;top:702.55px;font-size:13.17px;font-weight:400;color:#343741;">48 min</div>
<div class="t" style="left:590.80px;top:703.53px;font-size:12.96px;font-weight:400;color:#006BB8;-webkit-text-stroke:0.22px currentColor">Failed transactions is 90% in the last 5 mins for service: opbeans-python, env: production, type: request. Alert when &gt; 10%.</div>
<div style="position:absolute;left:31px;top:730px;width:16px;height:16px;box-sizing:border-box;border:1px solid #909296;border-radius:4px;background:#fff"></div>
<svg style="position:absolute;left:68px;top:732px;" width="16" height="12" viewBox="0 0 16 12"><path d="M0.6,5.8 C2.4,3.3 3.9,0.6 6.5,0.6 H9.5 C12.1,0.6 13.6,3.3 15.4,5.8 C13.6,8.4 12.1,11.1 9.5,11.1 H6.5 C3.9,11.1 2.4,8.4 0.6,5.8 Z" fill="none" stroke="#343741" stroke-width="1.15"/><rect x="5.4" y="3.5" width="5.3" height="4.9" rx="1.8" fill="none" stroke="#343741" stroke-width="1.15"/><rect x="7.5" y="5.4" width="1.1" height="1.1" fill="#8a8f99"/></svg>
<svg style="position:absolute;left:99.5px;top:736px;" width="17" height="4.5" viewBox="0 0 17 4.5"><rect x="0.5" y="0.5" width="3.2" height="3.2" fill="none" stroke="#343741" stroke-width="1"/><rect x="6.5" y="0.5" width="3.2" height="3.2" fill="none" stroke="#343741" stroke-width="1"/><rect x="12.5" y="0.5" width="3.2" height="3.2" fill="none" stroke="#343741" stroke-width="1"/></svg>
<div style="position:absolute;left:135px;top:730px;width:79px;height:20px;background:#4DD2CA;border-radius:3px"></div>
<div class="t" style="left:144.30px;top:734.09px;font-size:12.41px;font-weight:400;color:#000000;-webkit-text-stroke:0.35px currentColor">Recovered</div>
<div class="t" style="left:245.00px;top:730.55px;font-size:13.17px;font-weight:400;color:#343741;">Sep 8, 2023, 05:00:59.255 (UTC-7)</div>
<div class="t" style="right:845.40px;top:730.55px;font-size:13.17px;font-weight:400;color:#343741;">314 s</div>
<div class="t" style="left:590.80px;top:731.53px;font-size:12.96px;font-weight:400;color:#006BB8;-webkit-text-stroke:0.22px currentColor">Avg. latency is 1.8 s in the last 5 mins for service: opbeans-php, env: production, type: request. Alert when &gt; 1.5 s.</div>
<div style="position:absolute;left:31px;top:758px;width:16px;height:16px;box-sizing:border-box;border:1px solid #909296;border-radius:4px;background:#fff"></div>
<svg style="position:absolute;left:68px;top:760px;" width="16" height="12" viewBox="0 0 16 12"><path d="M0.6,5.8 C2.4,3.3 3.9,0.6 6.5,0.6 H9.5 C12.1,0.6 13.6,3.3 15.4,5.8 C13.6,8.4 12.1,11.1 9.5,11.1 H6.5 C3.9,11.1 2.4,8.4 0.6,5.8 Z" fill="none" stroke="#343741" stroke-width="1.15"/><rect x="5.4" y="3.5" width="5.3" height="4.9" rx="1.8" fill="none" stroke="#343741" stroke-width="1.15"/><rect x="7.5" y="5.4" width="1.1" height="1.1" fill="#8a8f99"/></svg>
<svg style="position:absolute;left:99.5px;top:764px;" width="17" height="4.5" viewBox="0 0 17 4.5"><rect x="0.5" y="0.5" width="3.2" height="3.2" fill="none" stroke="#343741" stroke-width="1"/><rect x="6.5" y="0.5" width="3.2" height="3.2" fill="none" stroke="#343741" stroke-width="1"/><rect x="12.5" y="0.5" width="3.2" height="3.2" fill="none" stroke="#343741" stroke-width="1"/></svg>
<div style="position:absolute;left:135px;top:758px;width:79px;height:20px;background:#4DD2CA;border-radius:3px"></div>
<div class="t" style="left:144.30px;top:762.09px;font-size:12.41px;font-weight:400;color:#000000;-webkit-text-stroke:0.35px currentColor">Recovered</div>
<div class="t" style="left:245.00px;top:758.55px;font-size:13.17px;font-weight:400;color:#343741;">Sep 8, 2023, 04:59:56.930 (UTC-7)</div>
<div class="t" style="right:845.40px;top:758.55px;font-size:13.17px;font-weight:400;color:#343741;">252 s</div>
<div class="t" style="left:590.80px;top:759.53px;font-size:12.96px;font-weight:400;color:#006BB8;-webkit-text-stroke:0.22px currentColor">Avg. latency is 1.5 s in the last 5 mins for service: opbeans-go, env: testing, type: request. Alert when &gt; 1.5 s.</div>
<div style="position:absolute;left:31px;top:786px;width:16px;height:16px;box-sizing:border-box;border:1px solid #909296;border-radius:4px;background:#fff"></div>
<svg style="position:absolute;left:68px;top:788px;" width="16" height="12" viewBox="0 0 16 12"><path d="M0.6,5.8 C2.4,3.3 3.9,0.6 6.5,0.6 H9.5 C12.1,0.6 13.6,3.3 15.4,5.8 C13.6,8.4 12.1,11.1 9.5,11.1 H6.5 C3.9,11.1 2.4,8.4 0.6,5.8 Z" fill="none" stroke="#343741" stroke-width="1.15"/><rect x="5.4" y="3.5" width="5.3" height="4.9" rx="1.8" fill="none" stroke="#343741" stroke-width="1.15"/><rect x="7.5" y="5.4" width="1.1" height="1.1" fill="#8a8f99"/></svg>
<svg style="position:absolute;left:99.5px;top:792px;" width="17" height="4.5" viewBox="0 0 17 4.5"><rect x="0.5" y="0.5" width="3.2" height="3.2" fill="none" stroke="#343741" stroke-width="1"/><rect x="6.5" y="0.5" width="3.2" height="3.2" fill="none" stroke="#343741" stroke-width="1"/><rect x="12.5" y="0.5" width="3.2" height="3.2" fill="none" stroke="#343741" stroke-width="1"/></svg>
<div style="position:absolute;left:135px;top:786px;width:79px;height:20px;background:#4DD2CA;border-radius:3px"></div>
<div class="t" style="left:144.30px;top:790.09px;font-size:12.41px;font-weight:400;color:#000000;-webkit-text-stroke:0.35px currentColor">Recovered</div>
<div class="t" style="left:245.00px;top:786.55px;font-size:13.17px;font-weight:400;color:#343741;">Sep 8, 2023, 04:59:56.930 (UTC-7)</div>
<div class="t" style="right:845.40px;top:786.55px;font-size:13.17px;font-weight:400;color:#343741;">252 s</div>
<div class="t" style="left:590.80px;top:787.53px;font-size:12.96px;font-weight:400;color:#006BB8;-webkit-text-stroke:0.22px currentColor">Avg. latency is 1.7 s in the last 5 mins for service: opbeans-python, env: production, type: request. Alert when &gt; 1.5 s.</div>
<div style="position:absolute;left:31px;top:814px;width:16px;height:16px;box-sizing:border-box;border:1px solid #909296;border-radius:4px;background:#fff"></div>
<svg style="position:absolute;left:68px;top:816px;" width="16" height="12" viewBox="0 0 16 12"><path d="M0.6,5.8 C2.4,3.3 3.9,0.6 6.5,0.6 H9.5 C12.1,0.6 13.6,3.3 15.4,5.8 C13.6,8.4 12.1,11.1 9.5,11.1 H6.5 C3.9,11.1 2.4,8.4 0.6,5.8 Z" fill="none" stroke="#343741" stroke-width="1.15"/><rect x="5.4" y="3.5" width="5.3" height="4.9" rx="1.8" fill="none" stroke="#343741" stroke-width="1.15"/><rect x="7.5" y="5.4" width="1.1" height="1.1" fill="#8a8f99"/></svg>
<svg style="position:absolute;left:99.5px;top:820px;" width="17" height="4.5" viewBox="0 0 17 4.5"><rect x="0.5" y="0.5" width="3.2" height="3.2" fill="none" stroke="#343741" stroke-width="1"/><rect x="6.5" y="0.5" width="3.2" height="3.2" fill="none" stroke="#343741" stroke-width="1"/><rect x="12.5" y="0.5" width="3.2" height="3.2" fill="none" stroke="#343741" stroke-width="1"/></svg>
<div style="position:absolute;left:135px;top:814px;width:79px;height:20px;background:#4DD2CA;border-radius:3px"></div>
<div class="t" style="left:144.30px;top:818.09px;font-size:12.41px;font-weight:400;color:#000000;-webkit-text-stroke:0.35px currentColor">Recovered</div>
<div class="t" style="left:245.00px;top:814.55px;font-size:13.17px;font-weight:400;color:#343741;">Sep 8, 2023, 04:59:09.018 (UTC-7)</div>
<div class="t" style="right:845.40px;top:814.55px;font-size:13.17px;font-weight:400;color:#343741;">22 h</div>
<div class="t" style="left:590.80px;top:815.53px;font-size:12.96px;font-weight:400;color:#006BB8;-webkit-text-stroke:0.22px currentColor">Failed transactions is 80% in the last 5 mins for service: opbeans-go, env: testing, type: request. Alert when &gt; 10%.</div>
</body></html>
